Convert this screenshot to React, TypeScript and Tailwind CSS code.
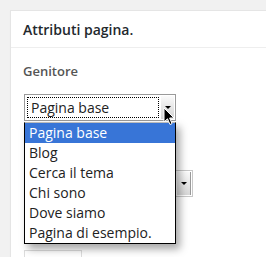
const options = ['Pagina base', 'Blog', 'Cerca il tema', 'Chi sono', 'Dove siamo', 'Pagina di esempio.']

function Arrow() {
  return <span className="block h-0 w-0 border-x-[3px] border-t-[3px] border-x-transparent border-t-black" />
}

export default function App() {
  return (
    <div
      className="relative h-[257px] w-[266px] overflow-hidden bg-[#f1f1f1] pl-[10px] pt-[10px]"
      style={{ fontFamily: '"Open Sans", "Noto Sans", sans-serif' }}
    >
      <div className="h-[300px] w-[300px] border border-[#e5e5e5] bg-white shadow-[0_1px_1px_rgba(0,0,0,0.04)]">
        <div className="border-b border-[#eeeeee] px-3 pb-[7px] pt-[9px] text-[14px] font-semibold leading-[20px] text-[#23282d]">
          Attributi pagina.
        </div>
        <div className="px-3 pt-[14px]">
          <p className="text-[13px] font-semibold leading-[18px] text-[#555]">Genitore</p>

          <div className="ml-px mt-[14px] flex h-[27px] w-[152px] border border-[#9a9a9a] bg-white">
            <div className="flex-1 p-[2px]">
              <div className="h-full border border-dotted border-black pl-[3px] text-[14px] leading-[20px] text-[#222]">
                Pagina base
              </div>
            </div>
            <div className="my-[1px] mr-[1px] flex w-[13px] justify-center bg-gradient-to-b from-[#fafafa] to-[#d4d4d4] pt-[10px]">
              <Arrow />
            </div>
          </div>

          {/* template select, mostly hidden behind the open list */}
          <div className="ml-px mt-[49px] flex h-[27px] w-[169px] justify-end border border-[#c8c8c8] bg-white">
            <div className="my-[1px] mr-[1px] flex w-[14px] items-center justify-center border-r border-[#999] bg-gradient-to-b from-[#fafafa] to-[#d8d8d8]">
              <Arrow />
            </div>
          </div>

          <div className="ml-px mt-[53px] h-[28px] w-[58px] border border-[#ddd] pl-[8px] text-[14px] leading-[24px] text-[#333]">
            0
          </div>
        </div>
      </div>

      <ul className="absolute left-[24px] top-[122px] w-[152px] border border-black border-t-[#bbb] bg-white shadow-[4px_5px_8px_rgba(0,0,0,0.35)]">
        {options.map((o, i) => (
          <li
            key={o}
            className={
              i === 0
                ? 'h-[20px] bg-[#3875d7] pl-[4px] text-[14px] leading-[20px] text-white'
                : 'h-[20px] pl-[4px] text-[14px] leading-[20px] text-[#222]'
            }
          >
            {o}
          </li>
        ))}
      </ul>

      <svg className="absolute left-[163px] top-[107px]" width="13" height="20" viewBox="0 0 13 20">
        <path
          d="M1 1 L1 15 L4.5 11.8 L7 17.5 L9 16.6 L6.6 11 L11 11 Z"
          fill="black"
          stroke="white"
          strokeWidth="1"
          strokeLinejoin="round"
        />
      </svg>
    </div>
  )
}
